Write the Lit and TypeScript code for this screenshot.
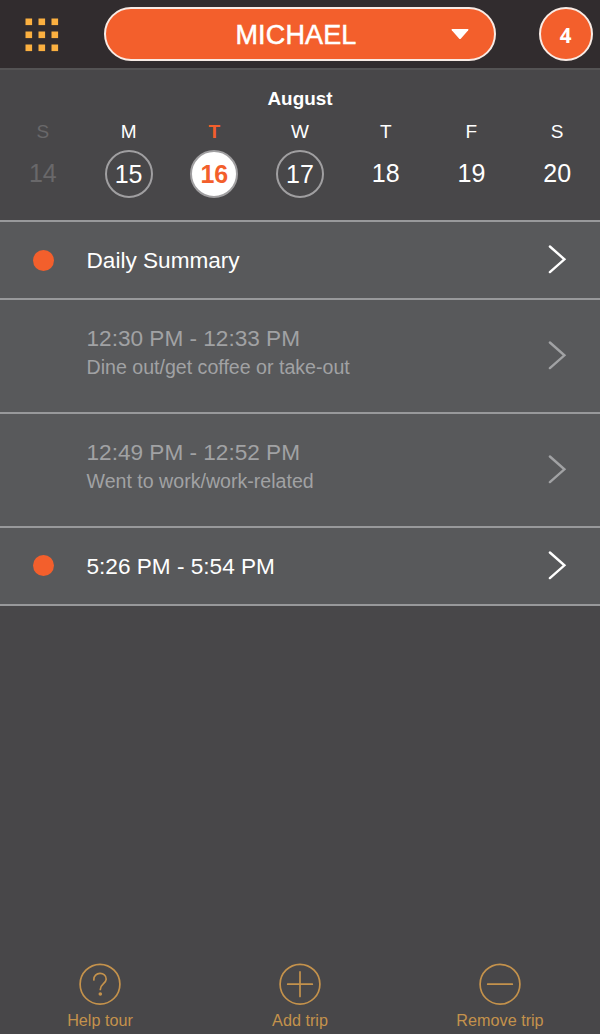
import { LitElement, html, css, svg, nothing } from "lit";
import { customElement, property } from "lit/decorators.js";
import { classMap } from "lit/directives/class-map.js";

interface Day {
  letter: string;
  date: number;
  state?: "past" | "ringed" | "selected";
}

interface Entry {
  title: string;
  note?: string;
  pending: boolean;
}

const DAYS: Day[] = [
  { letter: "S", date: 14, state: "past" },
  { letter: "M", date: 15, state: "ringed" },
  { letter: "T", date: 16, state: "selected" },
  { letter: "W", date: 17, state: "ringed" },
  { letter: "T", date: 18 },
  { letter: "F", date: 19 },
  { letter: "S", date: 20 },
];

const ENTRIES: Entry[] = [
  { title: "Daily Summary", pending: true },
  { title: "12:30 PM - 12:33 PM", note: "Dine out/get coffee or take-out", pending: false },
  { title: "12:49 PM - 12:52 PM", note: "Went to work/work-related", pending: false },
  { title: "5:26 PM - 5:54 PM", pending: true },
];

@customElement("top-bar")
class TopBar extends LitElement {
  @property() name = "";
  @property({ type: Number }) count = 0;

  static styles = css`
    :host {
      box-sizing: border-box;
      height: 70px;
      display: grid;
      grid-template-columns: 104px 392px 1fr;
      align-items: start;
      background: #312c2e;
      border-bottom: 2px solid #545354;
      color: #fff;
    }
    .menu {
      width: 34px;
      height: 34px;
      margin: 18px 0 0 25px;
      display: block;
      fill: #fbb040;
    }
    .picker {
      box-sizing: border-box;
      height: 54px;
      margin-top: 7px;
      border: 2px solid #f8ebe5;
      border-radius: 27px;
      background: #f35f2c;
      display: grid;
      grid-template-columns: 62px 1fr 66px;
      align-items: center;
      text-align: center;
      font-size: 27px;
      -webkit-text-stroke: 0.5px #fff;
      line-height: 52px;
    }
    .name {
      grid-column: 2;
      letter-spacing: 0.15px;
      padding-right: 4px;
      height: 50px;
    }
    .caret {
      width: 18px;
      height: 12px;
      margin-left: 23px;
      fill: #fff;
    }
    .badge {
      box-sizing: border-box;
      width: 54px;
      height: 54px;
      margin: 7px 0 0 42.5px;
      border: 2px solid #f8ebe5;
      border-radius: 50%;
      background: #f35f2c;
      font: 700 20.5px/53px "Open Sans", sans-serif;
      text-align: center;
    }
  `;

  render() {
    const steps = [0, 13, 26];
    return html`
      <svg class="menu" viewBox="0 0 34 34">
        ${steps.map((y) => steps.map((x) => svg`<rect x=${x + 0.5} y=${y + 0.5} width="6.6" height="6.6" />`))}
      </svg>
      <div class="picker">
        <span class="name">${this.name}</span>
        <svg class="caret" viewBox="0 0 18 12">
          <path d="M1.2 1H16.8Q18 1.1 17.2 2.2L9.8 10.7Q9 11.5 8.2 10.7L.8 2.2Q0 1.1 1.2 1Z" />
        </svg>
      </div>
      <div class="badge">${this.count}</div>
    `;
  }
}

@customElement("week-strip")
class WeekStrip extends LitElement {
  @property() month = "";
  @property({ attribute: false }) days: Day[] = [];

  static styles = css`
    :host {
      display: block;
      height: 150px;
      background: #484749;
      color: #fff;
      text-align: center;
    }
    .month {
      padding-top: 17px;
      font-size: 18.9px;
      font-weight: 700;
      line-height: 24px;
    }
    .week {
      display: grid;
      grid-template-columns: repeat(7, 1fr);
    }
    .day {
      display: flex;
      flex-direction: column;
      align-items: center;
    }
    .letter {
      margin-top: 9px;
      font-size: 19px;
      line-height: 24px;
    }
    .date {
      box-sizing: border-box;
      width: 48px;
      height: 48px;
      margin-top: 6px;
      font-size: 25px;
      line-height: 46px;
      border-radius: 50%;
    }
    .past {
      color: #69686a;
    }
    .ringed .date,
    .selected .date {
      border: 2px solid #a09fa1;
      line-height: 45px;
    }
    .selected {
      color: #f35f2c;
      font-weight: 700;
    }
    .selected .date {
      background: #fff;
    }
  `;

  render() {
    return html`
      <div class="month">${this.month}</div>
      <div class="week">
        ${this.days.map(
          (d) => html`<div class=${classMap({ day: true, [d.state ?? "plain"]: true })}>
            <span class="letter">${d.letter}</span>
            <span class="date">${d.date}</span>
          </div>`
        )}
      </div>
    `;
  }
}

@customElement("trip-row")
class TripRow extends LitElement {
  @property({ attribute: false }) entry!: Entry;

  static styles = css`
    :host {
      display: block;
    }
    .row {
      box-sizing: border-box;
      height: 78.3px;
      display: grid;
      grid-template-columns: 86.5px 1fr 54px;
      align-items: center;
      border-top: 2px solid #98999b;
      background: #58595b;
      color: #a1a2a4;
      font-size: 22.6px;
    }
    .tall {
      height: 113.7px;
    }
    .pending {
      color: #fff;
    }
    .dot {
      width: 21px;
      height: 21px;
      margin-left: 32.5px;
      border-radius: 50%;
      background: #f35f2c;
    }
    .text {
      grid-column: 2;
      line-height: 28px;
      padding-top: 2px;
    }
    .tall .text {
      padding: 0 0 6px;
    }
    .note {
      font-size: 19.6px;
      line-height: 28px;
    }
    .arrow {
      width: 20px;
      height: 30px;
      margin-left: 0.5px;
      fill: none;
      stroke: currentColor;
      stroke-width: 2.4;
      stroke-linecap: round;
    }
  `;

  render() {
    const { title, note, pending } = this.entry;
    return html`
      <div class=${classMap({ row: true, tall: !!note, pending })}>
        ${pending ? html`<span class="dot"></span>` : nothing}
        <div class="text">
          <div>${title}</div>
          ${note ? html`<div class="note">${note}</div>` : nothing}
        </div>
        <svg class="arrow" viewBox="0 0 20 30"><path d="M2.9 1.5L17.4 14.3L2.9 27.1" /></svg>
      </div>
    `;
  }
}

@customElement("app-root")
class AppRoot extends LitElement {
  static styles = css`
    :host {
      display: flex;
      flex-direction: column;
      height: 1034px;
      overflow: hidden;
      background: #484749;
      font-family: "Liberation Sans", Arial, sans-serif;
    }
    .list {
      flex: 1;
    }
    .end {
      height: 2px;
      background: #98999b;
    }
    .actions {
      display: grid;
      grid-template-columns: repeat(3, 1fr);
      height: 71px;
      color: #c4924c;
    }
    .action {
      display: flex;
      flex-direction: column;
      align-items: center;
      font-size: 16.2px;
      line-height: 20px;
    }
    .glyph {
      width: 42px;
      height: 42px;
      margin-bottom: 5px;
      fill: none;
      stroke: currentColor;
      stroke-width: 1.7;
      stroke-linecap: round;
    }
    .fill {
      fill: currentColor;
      stroke: none;
    }
  `;

  private action(label: string, shape: unknown) {
    return html`<div class="action">
      <svg class="glyph" viewBox="0 0 42 42"><circle cx="21" cy="21.2" r="19.9" />${shape}</svg>
      <span>${label}</span>
    </div>`;
  }

  render() {
    return html`
      <top-bar name="MICHAEL" .count=${4}></top-bar>
      <week-strip month="August" .days=${DAYS}></week-strip>
      <div class="list">
        ${ENTRIES.map((e) => html`<trip-row .entry=${e}></trip-row>`)}
        <div class="end"></div>
      </div>
      <div class="actions">
        ${this.action(
          "Help tour",
          svg`<path d="M14.8 17C14.3 8.4 27.6 8.4 27.2 16.3C27 20.6 21.3 21 21.3 26.5" /><circle class="fill" cx="21.3" cy="31" r="1.8" />`
        )}
        ${this.action("Add trip", svg`<path d="M8.7 21.2H33.3M21 8.9V33.5" />`)}
        ${this.action("Remove trip", svg`<path d="M8.7 21.2H33.3" />`)}
      </div>
    `;
  }
}
